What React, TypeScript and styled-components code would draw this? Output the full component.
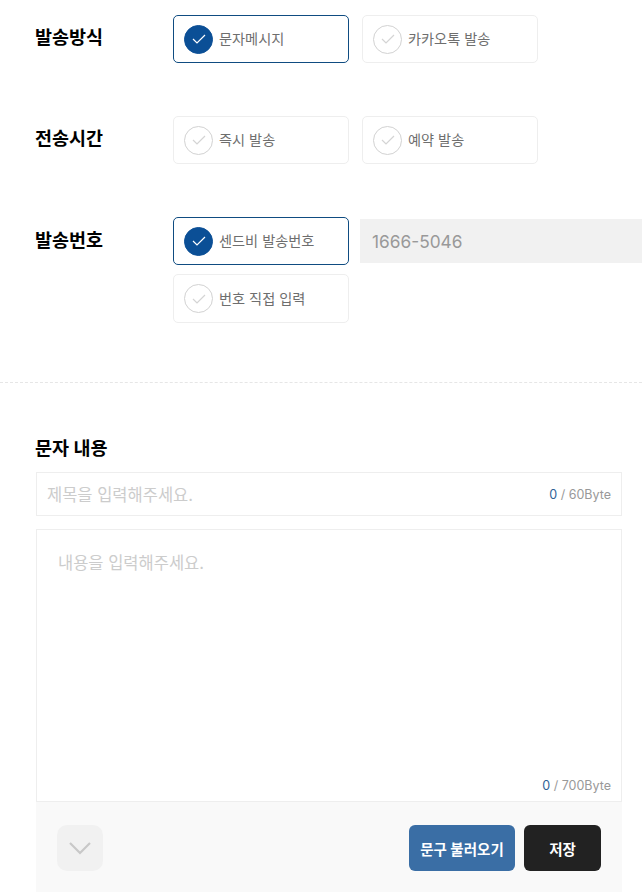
import { FC } from 'react';
import styled, { createGlobalStyle } from 'styled-components';

const GlobalStyle = createGlobalStyle`
  html, body {
    margin: 0;
    padding: 0;
    background: #fff;
    overflow: hidden;
  }
  * {
    box-sizing: border-box;
  }
  body {
    font-family: Inter, "Noto Sans CJK KR", sans-serif;
  }
`

interface OptionProps {
  label: string;
  checked?: boolean;
}

const Option: FC<OptionProps> = ({ label, checked }) => (
  <OptionCard checked={checked}>
    <CheckCircle checked={checked}>
      <svg width="14" height="10" viewBox="0 0 14 10" fill="none">
        <path
          d="M1 5 L5 9 L13 1"
          stroke={checked ? '#ffffff' : '#d4d4d4'}
          strokeWidth="1.2"
        />
      </svg>
    </CheckCircle>
    <OptionText>{label}</OptionText>
  </OptionCard>
)

const App: FC = () => {
  return (
    <Page>
      <GlobalStyle />
      <Settings>
        <Row>
          <RowLabel>발송방식</RowLabel>
          <Options>
            <Option label="문자메시지" checked />
            <Option label="카카오톡 발송" />
          </Options>
        </Row>
        <Row>
          <RowLabel>전송시간</RowLabel>
          <Options>
            <Option label="즉시 발송" />
            <Option label="예약 발송" />
          </Options>
        </Row>
        <Row>
          <RowLabel low>발송번호</RowLabel>
          <NumberGrid>
            <Option label="센드비 발송번호" checked />
            <NumberInput>1666-5046</NumberInput>
            <Option label="번호 직접 입력" />
          </NumberGrid>
        </Row>
      </Settings>
      <Divider />
      <Content>
        <ContentTitle>문자 내용</ContentTitle>
        <TitleBox>
          <TitlePlaceholder>제목을 입력해주세요.</TitlePlaceholder>
          <Counter>
            <b>0</b> / 60Byte
          </Counter>
        </TitleBox>
        <BodyBox>
          <BodyPlaceholder>내용을 입력해주세요.</BodyPlaceholder>
          <BodyCounter>
            <Counter>
              <b>0</b> / 700Byte
            </Counter>
          </BodyCounter>
        </BodyBox>
        <Footer>
          <ChevronButton>
            <svg width="24" height="14" viewBox="0 0 24 14" fill="none">
              <path d="M2 2 L12 12 L22 2" stroke="#c8c8c8" strokeWidth="2.2" />
            </svg>
          </ChevronButton>
          <FooterActions>
            <ActionButton color="#3a6ea5" wide>문구 불러오기</ActionButton>
            <ActionButton color="#222222">저장</ActionButton>
          </FooterActions>
        </Footer>
      </Content>
    </Page>
  );
};

export default App;

const Page = styled('div')`
  width: 642px;
  height: 892px;
  overflow: hidden;
  background: #fff;
`

const Settings = styled('div')`
  display: flex;
  flex-direction: column;
  gap: 53px;
  padding: 15px 0 0 35px;
`

const Row = styled('div')`
  display: flex;
`

const RowLabel = styled('div') <{ low?: boolean }>`
  width: 138px;
  flex-shrink: 0;
  padding-top: ${p => p.low ? 10 : 9}px;
  font-size: 18.5px;
  line-height: 27px;
  font-weight: 700;
  color: #000;
`

const Options = styled('div')`
  display: flex;
  gap: 13px;
`

const NumberGrid = styled('div')`
  display: grid;
  grid-template-columns: 176px 282px;
  grid-template-rows: 48px 49px;
  column-gap: 11px;
  row-gap: 9px;
`

const OptionCard = styled('div') <{ checked?: boolean }>`
  width: 176px;
  min-height: 48px;
  display: flex;
  align-items: center;
  gap: 6px;
  padding-left: 10px;
  background: #fff;
  border: 1px solid ${p => p.checked ? '#0f4c81' : '#eeeeee'};
  border-radius: 5px;
`

const CheckCircle = styled('span') <{ checked?: boolean }>`
  width: 29px;
  height: 29px;
  display: flex;
  align-items: center;
  justify-content: center;
  flex-shrink: 0;
  border-radius: 50%;
  background: ${p => p.checked ? '#0b4f96' : '#fff'};
  border: 1px solid ${p => p.checked ? '#0b4f96' : '#d2d2d2'};
`

const OptionText = styled('span')`
  margin-top: -2px;
  font-size: 14.2px;
  color: #6e6e6e;
  white-space: nowrap;
`

const NumberInput = styled('div')`
  height: 44px;
  align-self: center;
  display: flex;
  align-items: center;
  padding: 1px 0 0 12px;
  background: #f1f1f1;
  font-size: 17.3px;
  color: #999;
`

const Divider = styled('div')`
  margin-top: 59px;
  border-top: 1px dashed #e6e6e6;
`

const Content = styled('div')`
  padding: 52px 20px 0 36px;
`

const ContentTitle = styled('div')`
  margin-left: -1px;
  font-size: 18.5px;
  line-height: 27px;
  font-weight: 700;
  color: #000;
`

const TitleBox = styled('div')`
  height: 44px;
  margin-top: 10px;
  display: flex;
  align-items: center;
  justify-content: space-between;
  padding: 0 10px;
  border: 1px solid #eeeeee;
`

const TitlePlaceholder = styled('span')`
  font-size: 16.5px;
  color: #cccccc;
`

const Counter = styled('span')`
  font-size: 12.5px;
  color: #999;
  b {
    font-weight: 400;
    color: #2f6296;
  }
`

const BodyBox = styled('div')`
  height: 273px;
  margin-top: 13px;
  display: flex;
  flex-direction: column;
  justify-content: space-between;
  padding: 22px 10px 8px 21px;
  border: 1px solid #eeeeee;
`

const BodyPlaceholder = styled('span')`
  font-size: 16.5px;
  line-height: 22px;
  color: #cccccc;
`

const BodyCounter = styled('div')`
  display: flex;
  justify-content: flex-end;
`

const Footer = styled('div')`
  height: 90px;
  display: flex;
  justify-content: space-between;
  padding: 23px 21px 0;
  background: #f9f9f9;
`

const ChevronButton = styled('div')`
  width: 46px;
  height: 46px;
  display: flex;
  align-items: center;
  justify-content: center;
  background: #f1f1f1;
  border-radius: 10px;
`

const FooterActions = styled('div')`
  display: flex;
  gap: 9px;
`

const ActionButton = styled('div') <{ color: string; wide?: boolean }>`
  width: ${p => p.wide ? 106 : 77}px;
  height: 46px;
  display: flex;
  align-items: center;
  justify-content: center;
  background: ${p => p.color};
  border-radius: 6px;
  font-size: 14.5px;
  font-weight: 700;
  color: #fff;
  white-space: nowrap;
`
